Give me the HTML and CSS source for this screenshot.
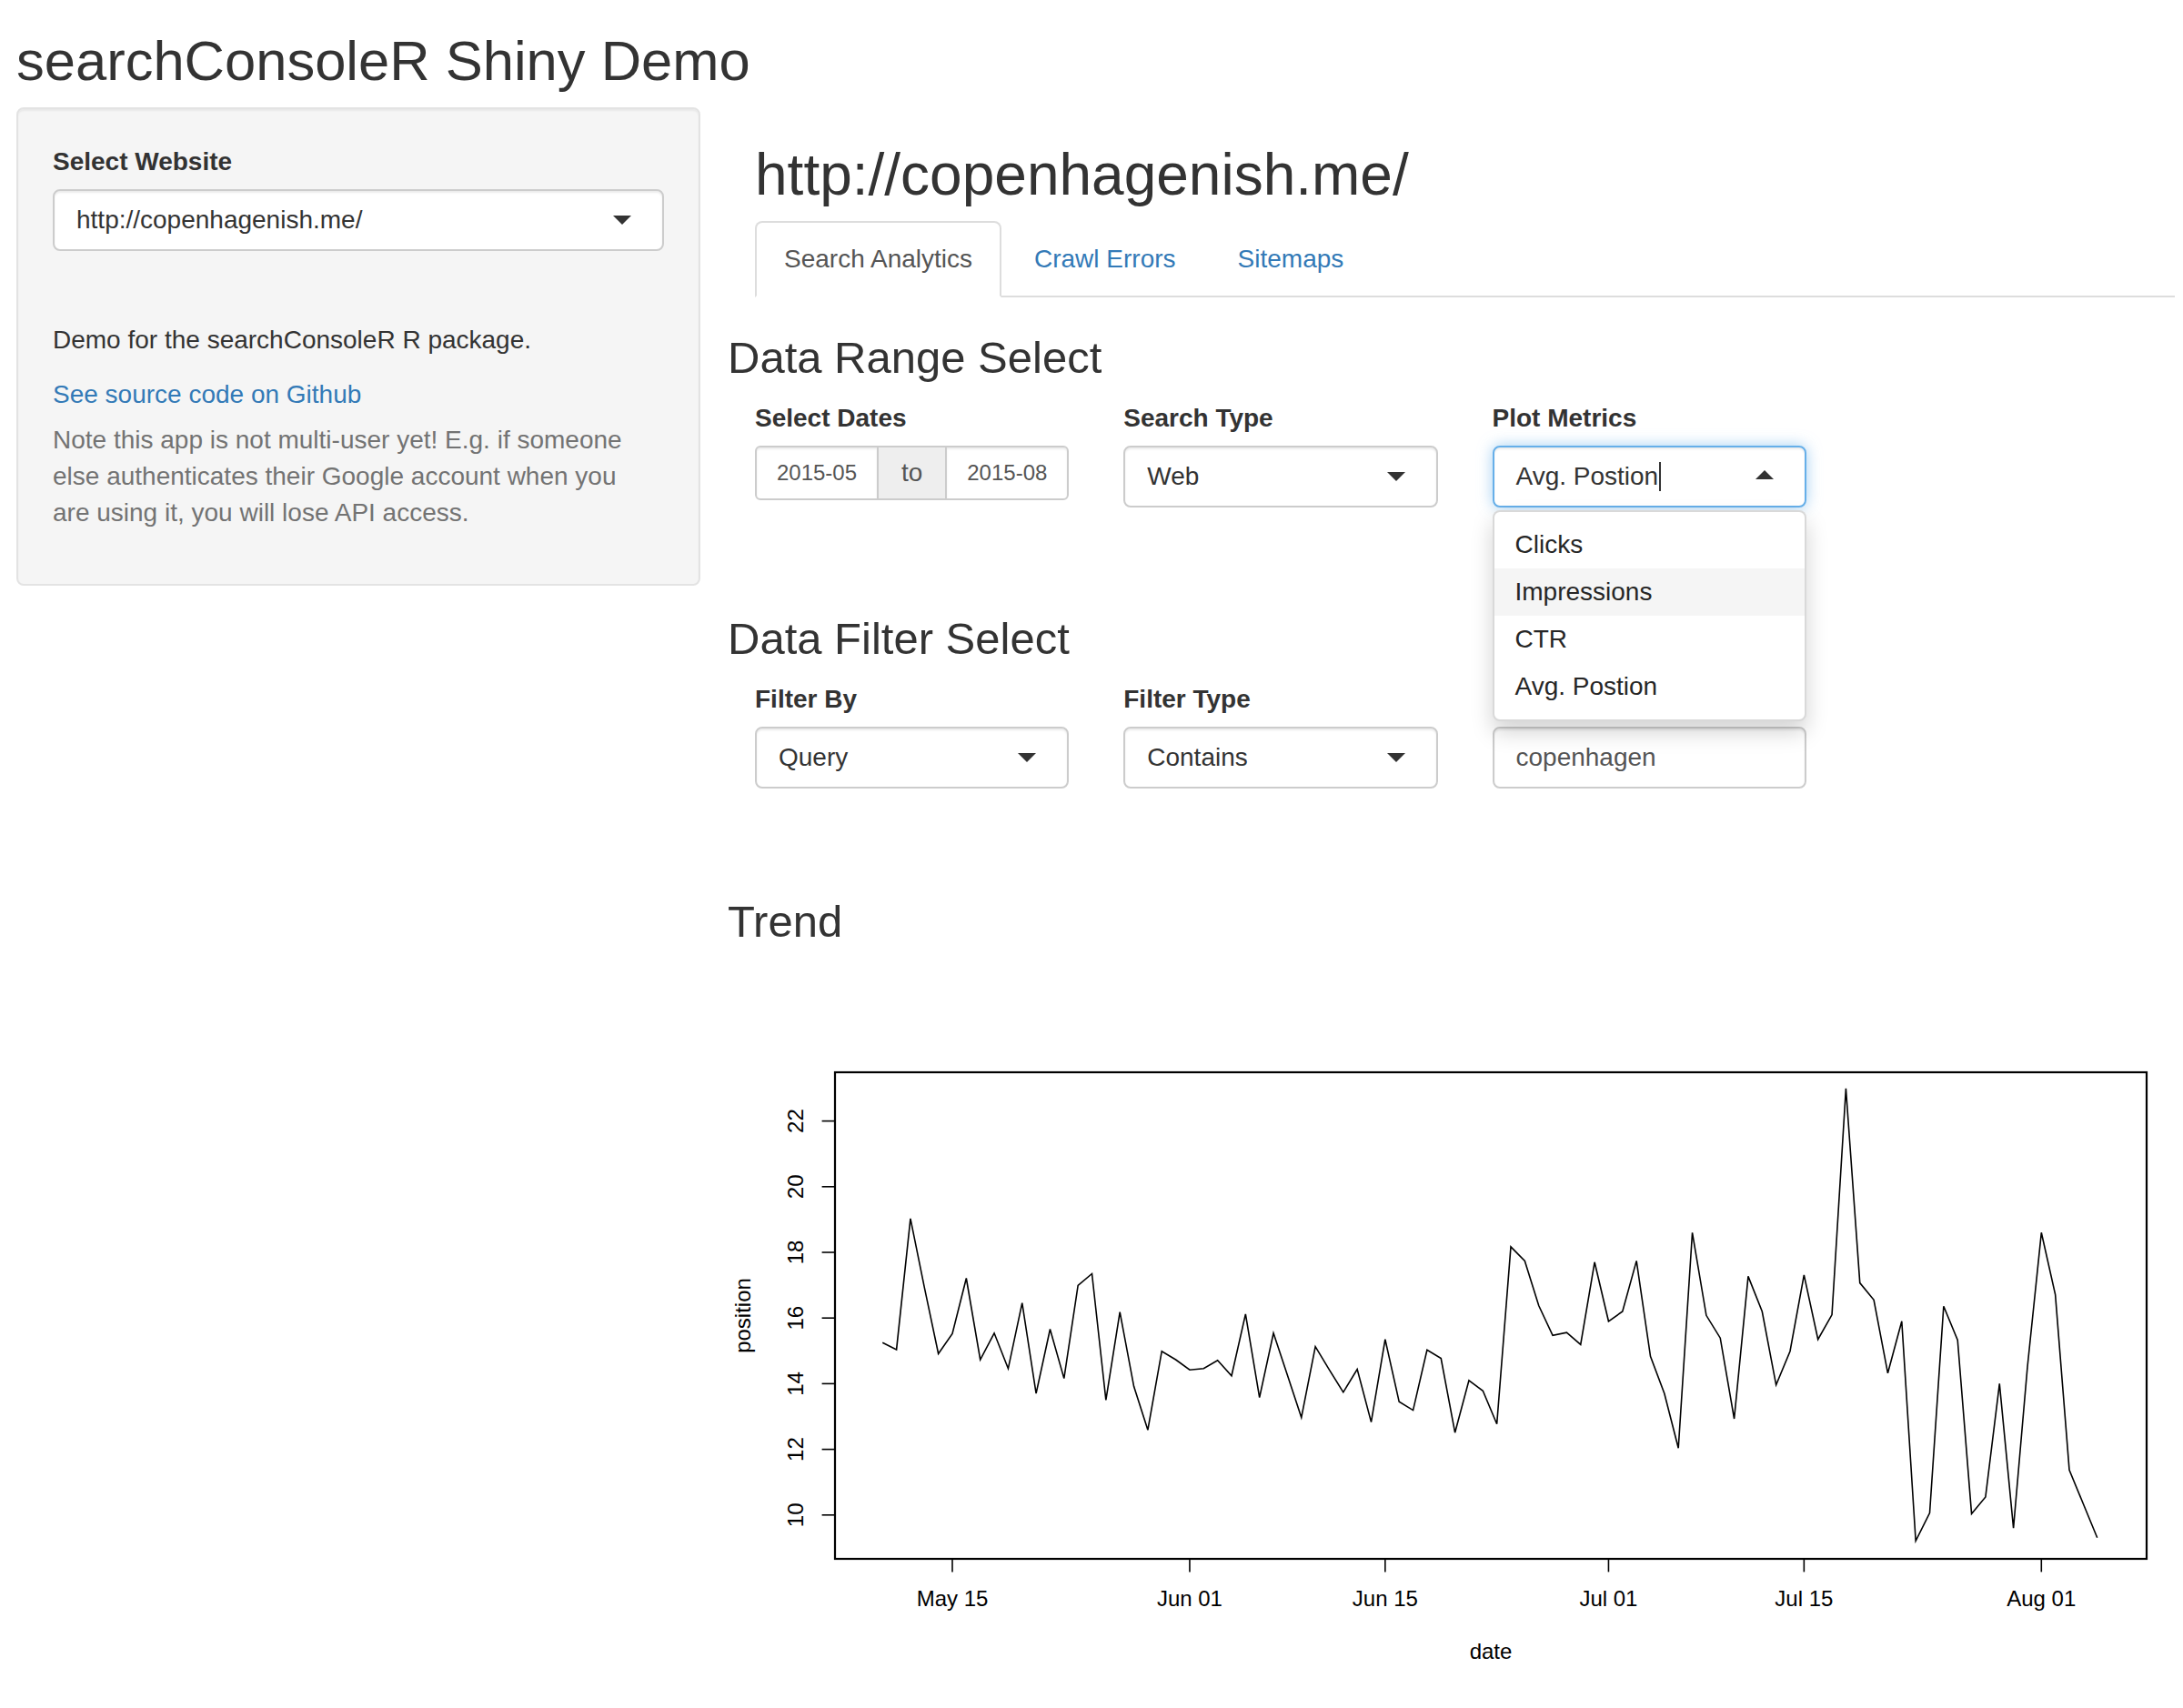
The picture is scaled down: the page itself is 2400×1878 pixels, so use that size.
FILE: index.html
```html
<!DOCTYPE html>
<html>
<head>
<meta charset="utf-8">
<title>searchConsoleR Shiny Demo</title>
<link rel="stylesheet" href="styles.css">
</head>
<body>
<div class="page">
  <h2 class="app-title">searchConsoleR Shiny Demo</h2>
  <div class="layout">
    <div class="sidebar">
      <div class="well">
        <div class="form-group">
          <label class="control-label">Select Website</label>
          <div class="selectize">
            <div class="selectize-input caret-down">http://copenhagenish.me/</div>
          </div>
        </div>
        <div class="spacer"></div>
        <p class="lead-p">Demo for the searchConsoleR R package.</p>
        <div class="link-line"><a href="#">See source code on Github</a></div>
        <p class="help-block">Note this app is not multi-user yet! E.g. if someone else authenticates their Google account when you are using it, you will lose API access.</p>
      </div>
    </div>
    <div class="main">
      <h1 class="site-title">http://copenhagenish.me/</h1>
      <ul class="nav-tabs">
        <li class="active"><a href="#">Search Analytics</a></li>
        <li><a href="#">Crawl Errors</a></li>
        <li><a href="#">Sitemaps</a></li>
      </ul>
      <div class="tab-content">
        <div class="row">
          <h3 class="section-title">Data Range Select</h3>
          <div class="col">
            <div class="form-group">
              <label class="control-label">Select Dates</label>
              <div class="daterange">
                <input class="date-input left" type="text" value="2015-05" readonly>
                <span class="addon">to</span>
                <input class="date-input right" type="text" value="2015-08" readonly>
              </div>
            </div>
          </div>
          <div class="col">
            <div class="form-group">
              <label class="control-label">Search Type</label>
              <div class="selectize">
                <div class="selectize-input caret-down">Web</div>
              </div>
            </div>
          </div>
          <div class="col col-top">
            <div class="form-group">
              <label class="control-label">Plot Metrics</label>
              <div class="selectize open">
                <div class="selectize-input focus caret-up">Avg. Postion<span class="cursor"></span></div>
                <div class="dropdown">
                  <div class="option">Clicks</div>
                  <div class="option active">Impressions</div>
                  <div class="option">CTR</div>
                  <div class="option">Avg. Postion</div>
                </div>
              </div>
            </div>
          </div>

          <h3 class="section-title gap-top">Data Filter Select</h3>
          <div class="col">
            <div class="form-group">
              <label class="control-label">Filter By</label>
              <div class="selectize">
                <div class="selectize-input caret-down">Query</div>
              </div>
            </div>
          </div>
          <div class="col">
            <div class="form-group">
              <label class="control-label">Filter Type</label>
              <div class="selectize">
                <div class="selectize-input caret-down">Contains</div>
              </div>
            </div>
          </div>
          <div class="col">
            <div class="form-group">
              <label class="control-label">&nbsp;</label>
              <input class="text-input" type="text" value="copenhagen" readonly>
            </div>
          </div>

          <h3 class="section-title gap-top trend">Trend</h3>
          <svg class="plot" width="1621" height="800" viewBox="0 0 1621 800">
            <polyline class="series" points="170.25,415.3 185.6,422.9 200.95,278.8 216.3,354.6 231.65,427.5 247,405.5 262.35,344.5 277.7,434 293.05,404.8 308.4,443.8 323.75,371.6 339.1,471.2 354.45,400.5 369.8,454.6 385.15,352.5 400.5,339.5 415.85,478.4 431.2,381.7 446.55,463.3 461.9,511.3 477.25,424.7 492.6,434 507.95,445.2 523.3,443.8 538.65,434.8 554,451.7 569.35,383.9 584.7,475.6 600.05,404.8 615.4,451 630.75,497.6 646.1,419.6 661.45,445.2 676.8,469.8 692.15,444.5 707.5,502.6 722.85,411.7 738.2,480.3 753.55,489.6 768.9,423.2 784.25,432.6 799.6,514.2 814.95,456.8 830.3,468.3 845.65,504.8 861,309.9 876.35,325.4 891.7,374.5 907.05,407.3 922.4,404.1 937.75,417.4 953.1,326.8 968.45,391.8 983.8,381 999.15,325.4 1014.5,430.4 1029.85,471.2 1045.2,531.2 1060.55,294.3 1075.9,385.3 1091.25,410.2 1106.6,499 1121.95,342.4 1137.3,381 1152.65,461.8 1168,424.7 1183.35,340.9 1198.7,411.7 1214.05,384.6 1229.4,135.9 1244.75,349.6 1260.1,368.3 1275.45,448.8 1290.8,391.8 1306.15,633.3 1321.5,602.6 1336.85,375.2 1352.2,412.4 1367.55,603.4 1382.9,584.9 1398.25,460.4 1413.6,619.2 1428.95,442.3 1444.3,294.3 1459.65,362.6 1475,555.3 1490.35,592.5 1505.7,629.7"/>
            <rect class="frame" x="118" y="118" width="1442" height="535"/>
            <g class="ticks">
              <line x1="118" y1="604.8" x2="103.6" y2="604.8"/>
              <line x1="118" y1="532.6" x2="103.6" y2="532.6"/>
              <line x1="118" y1="460.4" x2="103.6" y2="460.4"/>
              <line x1="118" y1="388.2" x2="103.6" y2="388.2"/>
              <line x1="118" y1="316" x2="103.6" y2="316"/>
              <line x1="118" y1="243.8" x2="103.6" y2="243.8"/>
              <line x1="118" y1="171.6" x2="103.6" y2="171.6"/>
              <line x1="247" y1="653" x2="247" y2="667.4"/>
              <line x1="507.95" y1="653" x2="507.95" y2="667.4"/>
              <line x1="722.85" y1="653" x2="722.85" y2="667.4"/>
              <line x1="968.45" y1="653" x2="968.45" y2="667.4"/>
              <line x1="1183.35" y1="653" x2="1183.35" y2="667.4"/>
              <line x1="1444.3" y1="653" x2="1444.3" y2="667.4"/>
            </g>
            <g class="axis-text">
              <text x="83" y="604.8" transform="rotate(-90 83 604.8)">10</text>
              <text x="83" y="532.6" transform="rotate(-90 83 532.6)">12</text>
              <text x="83" y="460.4" transform="rotate(-90 83 460.4)">14</text>
              <text x="83" y="388.2" transform="rotate(-90 83 388.2)">16</text>
              <text x="83" y="316" transform="rotate(-90 83 316)">18</text>
              <text x="83" y="243.8" transform="rotate(-90 83 243.8)">20</text>
              <text x="83" y="171.6" transform="rotate(-90 83 171.6)">22</text>
              <text x="247" y="705">May 15</text>
              <text x="507.95" y="705">Jun 01</text>
              <text x="722.85" y="705">Jun 15</text>
              <text x="968.45" y="705">Jul 01</text>
              <text x="1183.35" y="705">Jul 15</text>
              <text x="1444.3" y="705">Aug 01</text>
              <text x="839" y="763">date</text>
              <text x="25" y="385.5" transform="rotate(-90 25 385.5)">position</text>
            </g>
          </svg>
        </div>
      </div>
    </div>
  </div>
</div>
</body>
</html>
```

FILE: styles.css
```css
* { box-sizing: border-box; }

html, body {
  margin: 0;
  padding: 0;
  background: #fff;
}

body {
  width: 2400px;
  height: 1878px;
  overflow: hidden;
  font-family: "Liberation Sans", Arial, Helvetica, sans-serif;
  font-size: 28px;
  line-height: 40px;
  color: #333;
}

.page {
  padding-left: 18px;
}

.app-title {
  font-size: 61.5px;
  font-weight: normal;
  line-height: 66px;
  margin: 34px 0 18px;
}

.layout {
  display: flex;
  align-items: flex-start;
}

.sidebar {
  flex: 0 0 752px;
  margin-right: 30px;
}

.well {
  background: #f5f5f5;
  border: 2px solid #e3e3e3;
  border-radius: 8px;
  padding: 38px;
  box-shadow: inset 0 2px 2px rgba(0, 0, 0, 0.05);
}

.form-group {
  margin-bottom: 30px;
}

.control-label {
  display: block;
  font-weight: bold;
  line-height: 40px;
  margin-bottom: 10px;
}

.selectize {
  position: relative;
}

.selectize-input {
  position: relative;
  height: 68px;
  padding: 12px 24px;
  line-height: 40px;
  border: 2px solid #ccc;
  border-radius: 8px;
  background: #fff;
  color: #333;
  box-shadow: inset 0 2px 2px rgba(0, 0, 0, 0.075);
  white-space: nowrap;
}

.selectize-input::after {
  content: "";
  position: absolute;
  right: 34px;
  top: 50%;
  width: 0;
  height: 0;
  border-style: solid;
}

.caret-down::after {
  margin-top: -5px;
  border-width: 10px 10px 0 10px;
  border-color: #333 transparent transparent transparent;
}

.caret-up::after {
  margin-top: -7px;
  border-width: 0 10px 10px 10px;
  border-color: transparent transparent #333 transparent;
}

.selectize-input.focus {
  border-color: #66afe9;
  box-shadow: inset 0 2px 2px rgba(0, 0, 0, 0.075), 0 0 16px rgba(102, 175, 233, 0.6);
}

.cursor {
  display: inline-block;
  width: 2px;
  height: 32px;
  margin-left: 1px;
  background: #333;
  vertical-align: -7px;
}

.dropdown {
  position: absolute;
  top: 71px;
  left: 0;
  right: 0;
  z-index: 10;
  background: #fff;
  border: 2px solid rgba(0, 0, 0, 0.15);
  border-radius: 8px;
  box-shadow: 0 12px 24px rgba(0, 0, 0, 0.175);
  padding: 10px 0;
}

.option {
  padding: 6px 23px;
  line-height: 40px;
  color: #262626;
}

.option.active {
  background: #f5f5f5;
}

.spacer {
  height: 48px;
}

.lead-p {
  margin: 0 0 20px;
}

.link-line a {
  color: #337ab7;
  text-decoration: none;
}

.help-block {
  margin: 10px 12px 20px 0;
  color: #737373;
}

.main {
  flex: 0 0 1621px;
  padding: 0 30px;
}

.site-title {
  font-size: 64px;
  font-weight: normal;
  line-height: 70px;
  margin: 39px 0 16px;
}

.nav-tabs {
  display: flex;
  list-style: none;
  margin: 0;
  padding: 0;
  border-bottom: 2px solid #ddd;
}

.nav-tabs li {
  margin: 0 4px -2px 0;
}

.nav-tabs a {
  display: block;
  padding: 20px 30px;
  line-height: 40px;
  border: 2px solid transparent;
  border-radius: 8px 8px 0 0;
  color: #337ab7;
  text-decoration: none;
}

.nav-tabs li.active a {
  color: #555;
  background: #fff;
  border-color: #ddd #ddd transparent #ddd;
}

.row {
  display: flex;
  flex-wrap: wrap;
  margin: 0 -30px;
}

.section-title {
  width: 100%;
  font-size: 49px;
  font-weight: normal;
  line-height: 53px;
  margin: 40px 0 20px;
}

.section-title.gap-top {
  margin-top: 88px;
}

.section-title.trend {
  margin-top: 90px;
  margin-bottom: 21px;
}

.col {
  flex: 0 0 405.25px;
  width: 405.25px;
  min-width: 0;
  padding: 0 30px;
}

.col-top {
  position: relative;
  z-index: 5;
}

.daterange {
  display: flex;
  width: 100%;
  height: 60px;
}

.date-input {
  flex: 1 1 0;
  width: 0;
  min-width: 0;
  height: 60px;
  margin: 0;
  padding: 10px 8px;
  border: 2px solid #ccc;
  font-family: inherit;
  font-size: 24px;
  color: #555;
  text-align: center;
  background: #fff;
  box-shadow: inset 0 2px 2px rgba(0, 0, 0, 0.075);
  outline: none;
}

.date-input.left {
  border-radius: 6px 0 0 6px;
}

.date-input.right {
  border-radius: 0 6px 6px 0;
}

.addon {
  flex: 0 0 auto;
  display: flex;
  align-items: center;
  padding: 0 25px;
  background: #eee;
  border-top: 2px solid #ccc;
  border-bottom: 2px solid #ccc;
  color: #555;
  font-size: 28px;
}

.text-input {
  display: block;
  width: 100%;
  height: 68px;
  margin: 0;
  padding: 12px 24px;
  border: 2px solid #ccc;
  border-radius: 8px;
  font-family: inherit;
  font-size: 28px;
  color: #555;
  background: #fff;
  box-shadow: inset 0 2px 2px rgba(0, 0, 0, 0.075);
  outline: none;
}

.plot {
  display: block;
  flex: 0 0 1621px;
}

.plot .series {
  fill: none;
  stroke: #000;
  stroke-width: 1.6;
  stroke-linejoin: miter;
}

.plot .frame {
  fill: none;
  stroke: #000;
  stroke-width: 2.2;
}

.plot .ticks line {
  stroke: #000;
  stroke-width: 1.6;
}

.plot .axis-text text {
  font-family: "Liberation Sans", Arial, Helvetica, sans-serif;
  font-size: 24px;
  fill: #000;
  text-anchor: middle;
}
```
